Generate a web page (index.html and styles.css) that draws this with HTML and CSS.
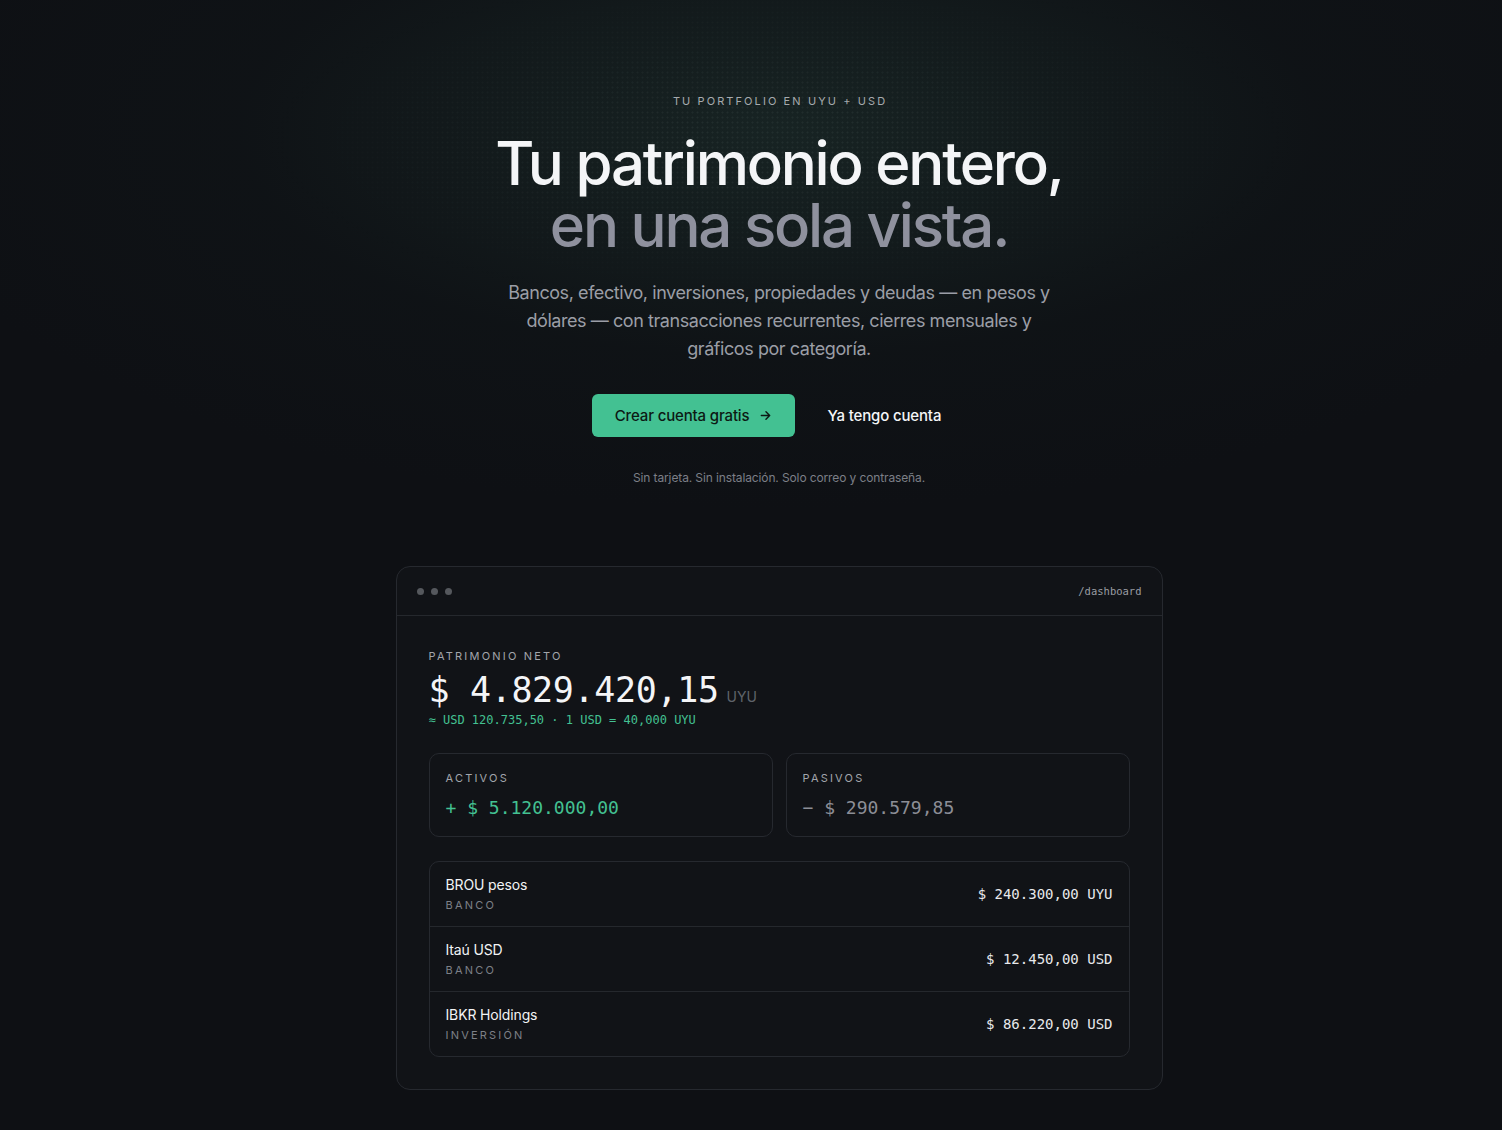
FILE: index.html
```html
<!DOCTYPE html>
<html lang="es">
<head>
<meta charset="utf-8">
<title>Patrimonio</title>
<link rel="stylesheet" href="styles.css">
</head>
<body>
<div class="glow"></div>
<div class="dots"></div>
<main class="hero">
  <p class="eyebrow">TU PORTFOLIO EN UYU + USD</p>
  <h1 class="title"><span class="l1">Tu patrimonio entero,</span><span class="l2">en una sola vista.</span></h1>
  <p class="lead">Bancos, efectivo, inversiones, propiedades y deudas — en pesos y dólares — con transacciones recurrentes, cierres mensuales y gráficos por categoría.</p>
  <div class="actions">
    <a class="btn-primary" href="#">Crear cuenta gratis
      <svg class="arrow" width="14" height="14" viewBox="0 0 14 14" fill="none" stroke="currentColor" stroke-width="1.5" stroke-linecap="round" stroke-linejoin="round"><path d="M2.5 7h9M7.5 3l4 4-4 4"/></svg>
    </a>
    <a class="btn-ghost" href="#">Ya tengo cuenta</a>
  </div>
  <p class="note">Sin tarjeta. Sin instalación. Solo correo y contraseña.</p>

  <section class="window">
    <header class="win-bar">
      <div class="win-dots"><span></span><span></span><span></span></div>
      <span class="win-path">/dashboard</span>
    </header>
    <div class="win-body">
      <p class="label">PATRIMONIO NETO</p>
      <div class="net"><span class="net-num">$ 4.829.420,15</span><span class="net-cur">UYU</span></div>
      <p class="net-sub">≈ USD 120.735,50 · 1 USD = 40,000 UYU</p>
      <div class="summary">
        <div class="sum-card">
          <p class="label">ACTIVOS</p>
          <p class="sum-val pos">+ $ 5.120.000,00</p>
        </div>
        <div class="sum-card">
          <p class="label">PASIVOS</p>
          <p class="sum-val neg">− $ 290.579,85</p>
        </div>
      </div>
      <ul class="accounts">
        <li class="acc">
          <div class="acc-info"><span class="acc-name">BROU pesos</span><span class="acc-type">BANCO</span></div>
          <span class="acc-val">$ 240.300,00 UYU</span>
        </li>
        <li class="acc">
          <div class="acc-info"><span class="acc-name">Itaú USD</span><span class="acc-type">BANCO</span></div>
          <span class="acc-val">$ 12.450,00 USD</span>
        </li>
        <li class="acc">
          <div class="acc-info"><span class="acc-name">IBKR Holdings</span><span class="acc-type">INVERSIÓN</span></div>
          <span class="acc-val">$ 86.220,00 USD</span>
        </li>
      </ul>
    </div>
  </section>
</main>
</body>
</html>
```
FILE: styles.css
```css
* { box-sizing: border-box; }
html, body { margin: 0; padding: 0; }
body {
  background: #0e1014;
  color: #f2f3f5;
  font-family: Inter, "Noto Sans", "Liberation Sans", sans-serif;
  min-height: 1130px;
  position: relative;
  overflow: hidden;
}
.glow {
  position: absolute;
  left: 0; top: 0; right: 0;
  height: 560px;
  background: radial-gradient(ellipse 900px 380px at 779px 130px, rgba(40,70,62,0.36), rgba(20,32,32,0.16) 60%, rgba(14,16,20,0) 100%);
  pointer-events: none;
}
.dots {
  position: absolute;
  left: 0; top: 0; right: 0;
  height: 420px;
  background-image: radial-gradient(circle, rgba(150,170,165,0.09) 0.8px, transparent 1.2px);
  background-size: 5px 5px;
  -webkit-mask-image: radial-gradient(ellipse 520px 170px at 779px 140px, #000 20%, transparent 100%);
  mask-image: radial-gradient(ellipse 520px 170px at 779px 140px, #000 20%, transparent 100%);
  pointer-events: none;
}
.hero {
  position: relative;
  display: flex;
  flex-direction: column;
  align-items: center;
  padding-top: 95px;
  padding-left: 56px;
}
.eyebrow {
  margin: 0;
  font-size: 11px;
  letter-spacing: 0.19em;
  color: #a6aaae;
  line-height: 12px;
  padding-left: 0.19em;
}
.title {
  margin: 25px 0 0;
  display: flex;
  flex-direction: column;
  align-items: center;
  font-size: 60px;
  line-height: 62px;
  font-weight: 500;
  letter-spacing: -0.037em;
}
.l1 { color: #f4f5f7; }
.l2 { color: #8f919e; }
.lead {
  margin: 23px 0 0;
  width: 560px;
  text-align: center;
  font-size: 18px;
  line-height: 28px;
  color: #9b9ea6;
  letter-spacing: -0.024em;
}
.actions {
  margin-top: 31px;
  margin-right: 25px;
  display: flex;
  align-items: center;
  gap: 32px;
}
.btn-primary {
  display: flex;
  align-items: center;
  gap: 10px;
  height: 43px;
  padding: 0 23px;
  background: #43c192;
  color: #0c1914;
  border-radius: 6px;
  text-decoration: none;
  font-size: 15px;
  font-weight: 500;
  letter-spacing: -0.01em;
}
.arrow { width: 13px; height: 13px; }
.btn-ghost {
  color: #f4f5f7;
  text-decoration: none;
  font-size: 15px;
  font-weight: 500;
  letter-spacing: -0.01em;
}
.note {
  margin: 33px 0 0;
  font-size: 12px;
  color: #7c7f87;
  letter-spacing: -0.01em;
}
.window {
  margin-top: 81px;
  width: 767px;
  border: 1px solid #26292f;
  border-radius: 14px;
  background: #111317;
  overflow: hidden;
}
.win-bar {
  height: 49px;
  border-bottom: 1px solid #25282d;
  display: flex;
  align-items: center;
  justify-content: space-between;
  padding: 0 20px;
}
.win-dots { display: flex; gap: 7px; }
.win-dots span {
  width: 7px; height: 7px;
  border-radius: 50%;
  background: #55585d;
}
.win-path {
  font-family: "DejaVu Sans Mono", "Liberation Mono", monospace;
  font-size: 10.5px;
  color: #9a9da3;
}
.win-body {
  padding: 33px 32px 32px;
}
.label {
  margin: 0;
  font-size: 11px;
  letter-spacing: 0.2em;
  color: #a2a5ab;
  line-height: 14px;
}
.net {
  display: flex;
  align-items: baseline;
  gap: 8px;
  margin-top: 5px;
}
.net-num {
  font-family: "DejaVu Sans Mono", "Liberation Mono", monospace;
  font-size: 35px;
  line-height: 44px;
  color: #f4f5f7;
  letter-spacing: -0.01em;
}
.net-cur {
  font-size: 14px;
  color: #5f636a;
}
.net-sub {
  margin: 1px 0 0;
  font-family: "DejaVu Sans Mono", "Liberation Mono", monospace;
  font-size: 12px;
  color: #43c192;
  line-height: 14px;
}
.summary {
  margin-top: 26px;
  display: grid;
  grid-template-columns: 1fr 1fr;
  gap: 13px;
}
.sum-card {
  border: 1px solid #26292f;
  border-radius: 10px;
  padding: 17px 16px 18px;
  height: 84px;
}
.sum-val {
  margin: 12px 0 0;
  font-family: "DejaVu Sans Mono", "Liberation Mono", monospace;
  font-size: 18px;
  line-height: 22px;
}
.pos { color: #43c192; }
.neg { color: #8c8e96; }
.accounts {
  list-style: none;
  margin: 24px 0 0;
  padding: 0;
  border: 1px solid #26292f;
  border-radius: 10px;
}
.acc {
  height: 65px;
  display: flex;
  align-items: center;
  justify-content: space-between;
  padding: 0 16px;
  border-top: 1px solid #25282d;
}
.acc:first-child { border-top: none; height: 64px; }
.acc-info { display: flex; flex-direction: column; gap: 6px; }
.acc-name { font-size: 14px; color: #f2f3f5; line-height: 17px; letter-spacing: -0.01em; }
.acc-type { font-size: 11px; letter-spacing: 0.2em; color: #7d8087; line-height: 13px; }
.acc-val {
  font-family: "DejaVu Sans Mono", "Liberation Mono", monospace;
  font-size: 14px;
  color: #e8e9ec;
}
```
